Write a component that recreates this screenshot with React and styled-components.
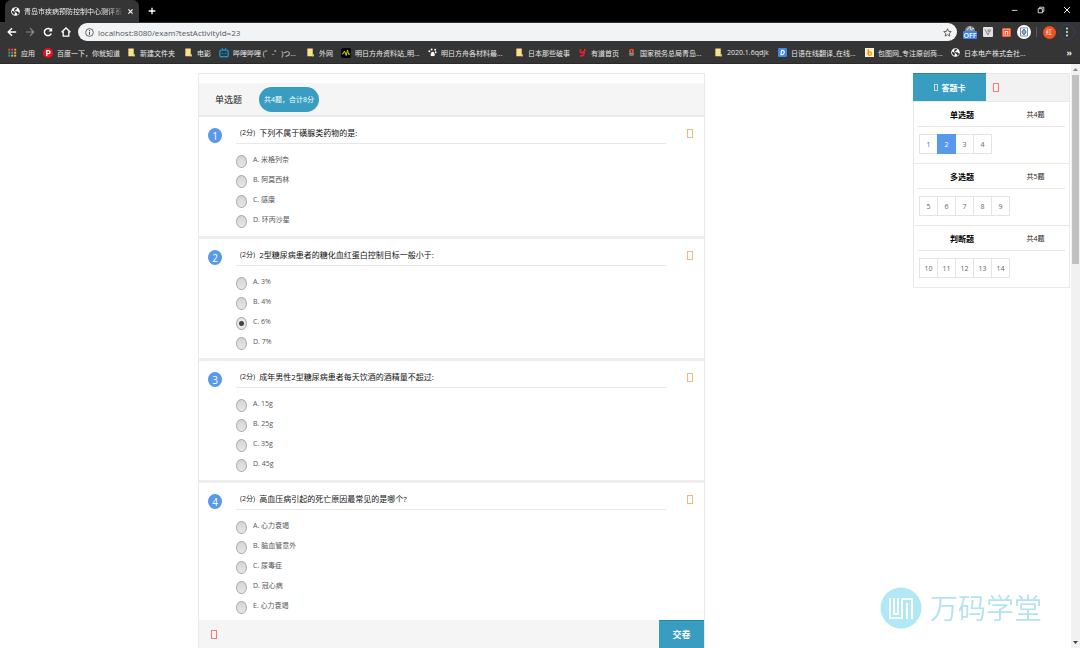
import React, { useState } from "react";
import styled, { createGlobalStyle, css } from "styled-components";

const Global = createGlobalStyle`
  * { box-sizing: border-box; }
  html, body, #root { height: 100%; }
  body { margin: 0; overflow: hidden; background: #fff; }
  body, button, input {
    font-family: "Open Sans", "Noto Sans CJK SC", sans-serif;
    font-size: 7px;
  }
  button { border: 0; padding: 0; background: none; color: inherit; cursor: pointer; }
  a { color: inherit; text-decoration: none; }
  h1, h2, h3, p, ul, ol, fieldset, legend { margin: 0; padding: 0; border: 0; font-weight: 400; list-style: none; }
`;

const Page = styled.div`
  display: flex;
  flex-direction: column;
  height: 100vh;
`;

/* ---------- browser frame ---------- */

const TabStrip = styled.header`
  display: flex;
  align-items: flex-end;
  height: 22px;
  padding-left: 5px;
  background: #000;
  color: #fff;
`;

const Tab = styled.div`
  display: flex;
  align-items: center;
  gap: 4px;
  height: 22px;
  padding: 0 5px 0 6px;
  border-radius: 6px 6px 0 0;
  background: #353535;
`;

const TabTitle = styled.span`
  white-space: nowrap;
  color: #eee;
  mask-image: linear-gradient(90deg, #000 85%, rgba(0, 0, 0, 0.2));
`;

const IconButton = styled.button`
  display: grid;
  place-items: center;
  width: ${(p) => p.$w || 18}px;
  height: ${(p) => p.$h || 18}px;
  flex: none;
  svg { display: block; }
`;

const WindowButtons = styled.div`
  display: flex;
  align-items: center;
  margin-left: auto;
`;

const Toolbar = styled.nav`
  display: flex;
  align-items: center;
  height: 20px;
  padding: 0 4px 0 3px;
  background: #353535;
  color: #fff;
`;

const AddressBar = styled.form`
  display: flex;
  align-items: center;
  flex: 1;
  gap: 4px;
  height: 18px;
  margin: 0 4px 0 3px;
  padding: 0 5px 0 7px;
  border-radius: 9px;
  background: #f1f3f4;
  color: #444;
`;

const AddressInput = styled.input`
  flex: 1;
  min-width: 0;
  border: 0;
  padding: 0;
  background: transparent;
  color: #55585c;
  font-size: 8px;
  outline: 0;
`;

const Divider = styled.span`
  width: 1px;
  height: 10px;
  margin: 0 3px;
  background: #5a5a5a;
`;

const Profile = styled.span`
  display: grid;
  place-items: center;
  width: 13px;
  height: 13px;
  border-radius: 50%;
  background: #f4511e;
  color: #fff;
  font-size: 6px;
  line-height: 1;
`;

const MenuRing = styled.span`
  display: grid;
  place-items: center;
  width: 16px;
  height: 16px;
  border: 1px solid #2b4468;
  border-radius: 50%;
`;

const BookmarkBar = styled.nav`
  display: flex;
  align-items: center;
  height: 22px;
  padding: 0 8px;
  border-bottom: 1px solid #2a2a2a;
  background: #353535;
  color: #e8e8e8;
`;

const Bookmark = styled.a`
  display: flex;
  align-items: center;
  gap: 4px;
  flex: 0 0 ${(p) => p.$w}px;
  white-space: nowrap;
  svg { flex: none; }
`;

const More = styled.button`
  margin-left: auto;
  font-size: 9px;
  font-weight: 700;
`;

/* ---------- page ---------- */

const Viewport = styled.div`
  display: flex;
  flex: 1;
  min-height: 0;
`;

const Content = styled.main`
  display: grid;
  flex: 1;
  grid-template-columns: 198fr 507fr 208fr 157fr 1fr;
  grid-template-rows: minmax(0, 1fr);
  padding-top: 9px;
`;

const Exam = styled.form`
  display: flex;
  flex-direction: column;
  grid-column: 2;
  border: 1px solid #eaeaea;
  border-bottom: 0;
`;

const ExamBody = styled.div`
  flex: 1;
  min-height: 0;
  padding-top: 9px;
  overflow: hidden;
`;

const GroupHeader = styled.div`
  display: flex;
  align-items: center;
  gap: 17px;
  height: 34px;
  padding-left: 16px;
  border-bottom: 2px solid #eaeaea;
  background: #f5f5f5;
`;

const GroupTitle = styled.h1`
  color: #222;
  font-size: 9px;
`;

const Pill = styled.span`
  padding: 0 5px;
  border-radius: 13px;
  background: #399dc2;
  color: #fff;
  line-height: 25px;
`;

const Question = styled.fieldset`
  display: grid;
  grid-template-columns: 28px minmax(0, 1fr) 38px;
  min-width: 0;
  padding: 0 0 6px 9px;
  border-bottom: 3px solid #eee;
`;

const Number = styled.span`
  display: grid;
  place-items: center;
  width: 14px;
  height: 15px;
  margin-top: 11px;
  border-radius: 50%;
  background: #5899eb;
  color: #fff;
  font-size: 10px;
  line-height: 1;
`;

const QuestionTitle = styled.div`
  display: flex;
  align-items: center;
  gap: 4px;
  height: 27px;
  padding: 6px 0 0 4px;
  border-bottom: 1px solid #e8e8e8;
  color: #222;
  line-height: 12px;
`;

const QuestionText = styled.h2`
  color: #111;
  font-size: 8px;
`;

const Options = styled.div`
  padding-top: 6px;
`;

const Option = styled.label`
  display: flex;
  align-items: center;
  gap: 6px;
  height: 20px;
  color: #555;
  line-height: 14px;
`;

const Radio = styled.input`
  appearance: none;
  width: 11px;
  height: 13px;
  margin: 3px 0 0;
  border: 1px solid #aaa;
  border-radius: 50%;
  background: linear-gradient(#d6d6d6, #e6e6e6);
  &:checked {
    background: radial-gradient(circle, #444 0 2px, #e8e8e8 3px);
  }
`;

const tones = { orange: "#f7b67c", red: "#ff7676", white: "#bfe0ec" };

const Glyph = styled.span`
  display: block;
  width: ${(p) => (p.$small ? 4 : 6)}px;
  height: ${(p) => (p.$small ? 7 : 9)}px;
  border: 1px solid ${(p) => tones[p.$tone]};
`;

const MarkButton = styled.button`
  justify-self: end;
  align-self: start;
  margin: 12px 11px 0 0;
`;

const ExamFooter = styled.footer`
  display: flex;
  align-items: center;
  justify-content: space-between;
  flex: none;
  height: 28px;
  padding-left: 12px;
  background: #f5f5f5;
`;

const Submit = styled.button`
  width: 45px;
  height: 28px;
  border-top: 1px solid #2289b1;
  background: #399dc2;
  color: #fff;
  font-size: 9px;
  font-weight: 700;
`;

const Card = styled.aside`
  grid-column: 4;
  align-self: start;
  border: 1px solid #eaeaea;
  border-width: 0 1px 0 1px;
`;

const CardTabs = styled.div`
  display: flex;
  height: 29px;
  margin-left: -1px;
  border: 1px solid #e8e8e8;
  border-width: 1px 0;
  background: #f2f2f2;
`;

const CardTab = styled.button`
  display: flex;
  align-items: center;
  justify-content: center;
  gap: 4px;
  height: 28px;
  margin-top: -1px;
  ${(p) =>
    p.$active
      ? css`
          width: 73px;
          border-top: 1px solid #2289b1;
          background: #399dc2;
          color: #fff;
          font-size: 8px;
          font-weight: 700;
        `
      : css`
          width: 20px;
        `}
`;

const CardSection = styled.section`
  height: 62px;
  padding: 0 4px;
  border-bottom: 1px solid #eaeaea;
`;

const CardHead = styled.div`
  display: grid;
  grid-template-columns: 3fr 2fr;
  align-items: center;
  height: 25px;
  border-bottom: 1px solid #e6e6e6;
  color: #222;
  text-align: center;
`;

const CardTitle = styled.h3`
  color: #000;
  font-size: 8px;
  font-weight: 700;
`;

const Cells = styled.ol`
  display: flex;
  padding: 7px 1px 0;
`;

const Cell = styled.button`
  width: 19px;
  height: 20px;
  margin-right: -1px;
  border: 1px solid ${(p) => (p.$on ? "#5899eb" : "#e4e4e4")};
  background: ${(p) => (p.$on ? "#5899eb" : "#fff")};
  color: ${(p) => (p.$on ? "#fff" : "#666")};
  position: relative;
  z-index: ${(p) => (p.$on ? 1 : 0)};
`;

const ScrollTrack = styled.div`
  display: flex;
  flex-direction: column;
  align-items: center;
  justify-content: space-between;
  width: 9px;
  padding: 3px 0;
  background: #f1f1f1;
`;

const ScrollUpper = styled.div`
  display: flex;
  flex-direction: column;
  align-items: center;
  gap: 3px;
  height: 34%;
`;

const Thumb = styled.div`
  flex: 1;
  width: 7px;
  background: #c1c1c1;
`;

const Watermark = styled.div`
  position: fixed;
  right: 38px;
  bottom: 19px;
  display: flex;
  align-items: center;
  gap: 8px;
  color: #b5e2f1;
  font-size: 28px;
  font-weight: 350;
  line-height: 42px;
  pointer-events: none;
`;

/* ---------- drawings ---------- */

const Svg = ({ s = 10, children, ...rest }) => (
  <svg width={s} height={s} viewBox="0 0 10 10" fill="none" stroke="currentColor" aria-hidden="true" {...rest}>
    {children}
  </svg>
);

const Globe = () => (
  <Svg s={9} stroke="none">
    <circle cx="5" cy="5" r="4.8" fill="#fff" />
    <path d="M1 4.3 3.4 5l1 1.4-.6 2.3C2 8.2 1 6.5 1 4.3ZM4 1.3l2.7-.1-.5 1.7-1.6.7.3 1 2.1.2 1.5 1.4 1-.4C9 7 8 8.5 6.8 8.7l-.4-2-2-1.2-1-1.6Z" fill="#333" />
  </Svg>
);
const Folder = () => (
  <Svg s={9} stroke="none">
    <path d="M1.5.5h6v6.8h1.2v2H1.5Z" fill="#fbe18b" />
    <path d="M7.5 7.3h1.2v2H6.5Z" fill="#e8bf4c" />
  </Svg>
);
const marks = {
  apps: (
    <Svg s={9} stroke="none">
      {[0, 1, 2].map((r) =>
        [0, 1, 2].map((c) => (
          <rect key={`${r}${c}`} x={c * 3.3 + 0.3} y={r * 3.3 + 0.8} width="2.2" height="2.2"
            fill={[["#ea4335", "#ea4335", "#f58a35"], ["#34a853", "#4285f4", "#fbbc04"], ["#34a853", "#b7b7b7", "#fbbc04"]][r][c]} />
        ))
      )}
    </Svg>
  ),
  pin: (
    <Svg s={10}>
      <circle cx="5" cy="5" r="5" fill="#f00d1e" stroke="none" />
      <path d="M3.7 8V2.7h1.8a1.4 1.4 0 0 1 0 3H3.7" stroke="#fff" strokeWidth="1.3" />
    </Svg>
  ),
  folder: <Folder />,
  bili: (
    <Svg s={10} stroke="#1596d1" strokeWidth="1.3">
      <rect x=".8" y="2.2" width="8.4" height="6.5" rx="1.3" />
      <path d="m3 .4 1.2 1.5M7 .4 5.8 1.9M3.3 4.7v1.5M6.7 4.7v1.5M2.5 9.5h1M6.5 9.5h1" />
    </Svg>
  ),
  wave: (
    <Svg s={10}>
      <rect width="10" height="10" rx="2" fill="#000" stroke="none" />
      <path d="m.8 6 1.4-.3L3.5 3l1.7 4.5L6.5 2l1.2 4.5 1.5-.7" stroke="#d9d400" strokeWidth="1" />
    </Svg>
  ),
  paw: (
    <Svg s={9} stroke="none" fill="#fff">
      <circle cx="1.5" cy="3.7" r="1.1" /><circle cx="4" cy="1.7" r="1.1" />
      <circle cx="8" cy="2" r="1.1" /><circle cx="8.5" cy="4.7" r="1" />
      <path d="M5 4.2c2 0 1.8 1.7 2.5 2.8.7 1.3-.8 2.3-2.3 2-1.7.3-3-.6-2.2-2C3.6 5.9 3.3 4.2 5 4.2Z" />
    </Svg>
  ),
  y: (
    <Svg s={9} stroke="#e8202c" strokeWidth="1.9">
      <path d="M2.8 1.2 2.5 4c0 1.6 3.4 1.7 4.3-.2M7.7 1 6.5 6.5C6 8.7 4 9 2.2 8.6" />
    </Svg>
  ),
  tax: (
    <Svg s={9} stroke="none">
      <circle cx="5" cy="3.5" r="2.7" fill="#e0532f" />
      <path d="M2.2 6h5.6v1.2H2.2Z" fill="#c8b8a0" /><path d="M2.8 7.8h4.4v1H2.8Z" fill="#6b8a9a" />
      <path d="M4.5 2h1v3h-1Z" fill="#5a2b20" />
    </Svg>
  ),
  d: (
    <Svg s={9}>
      <rect width="10" height="10" rx="1.5" fill="#3f86ea" stroke="none" />
      <path d="M4 2.7h1.2c2.8 0 2.2 4.6-.7 4.6h-1.2Z" stroke="#fff" strokeWidth="1.3" />
    </Svg>
  ),
  b: (
    <Svg s={9}>
      <rect width="10" height="10" fill="#fff3cf" stroke="none" />
      <path d="M3.6 1.2v6.6" stroke="#f39a1c" strokeWidth="1.8" />
      <circle cx="5.3" cy="6.3" r="1.8" stroke="#f39a1c" strokeWidth="1.6" />
    </Svg>
  ),
  globe: <Globe />,
};

const bookmarks = [
  ["apps", "应用", 35], ["pin", "百度一下，你就知道", 84], ["folder", "新建文件夹", 57],
  ["folder", "电影", 35], ["bili", "哔哩哔哩 (゜-゜)つ...", 87], ["folder", "外网", 35],
  ["wave", "明日方舟资料站_明...", 87], ["paw", "明日方舟各材料最...", 87], ["folder", "日本那些破事", 63],
  ["y", "有道首页", 49], ["tax", "国家税务总局青岛...", 87], ["folder", "2020.1.6qdjk", 64],
  ["d", "日语在线翻译_在线...", 87], ["b", "包图网_专注原创商...", 86], ["globe", "日本电产株式会社...", 87],
];

const questions = [
  ["下列不属于磺脲类药物的是:", ["米格列奈", "阿莫西林", "感康", "环丙沙星"]],
  ["2型糖尿病患者的糖化血红蛋白控制目标一般小于:", ["3%", "4%", "6%", "7%"]],
  ["成年男性2型糖尿病患者每天饮酒的酒精量不超过:", ["15g", "25g", "35g", "45g"]],
  ["高血压病引起的死亡原因最常见的是哪个?", ["心力衰竭", "脑血管意外", "尿毒症", "冠心病", "心力衰竭"]],
];

const groups = [
  ["单选题", "共4题", [1, 2, 3, 4]],
  ["多选题", "共5题", [5, 6, 7, 8, 9]],
  ["判断题", "共4题", [10, 11, 12, 13, 14]],
];

function BrowserFrame() {
  return (
    <>
      <TabStrip>
        <Tab>
          <Globe />
          <TabTitle>青岛市疾病预防控制中心测评系</TabTitle>
          <IconButton $w={8} aria-label="关闭标签页">
            <Svg s={7} strokeWidth="1.5"><path d="m2 2 6 6M8 2 2 8" /></Svg>
          </IconButton>
        </Tab>
        <IconButton $w={26} $h={22} aria-label="新标签页">
          <Svg s={8} strokeWidth="1.7"><path d="M5 .8v8.4M.8 5h8.4" /></Svg>
        </IconButton>
        <WindowButtons>
          <IconButton $w={26} $h={24} aria-label="最小化"><Svg s={8}><path d="M1 5.5h7" /></Svg></IconButton>
          <IconButton $w={26} $h={24} aria-label="还原">
            <Svg s={8}><path d="M1.5 3.3h5.2v5.2H1.5ZM3.3 3.3V1.5h5.2v5.2H6.7" /></Svg>
          </IconButton>
          <IconButton $w={26} $h={24} aria-label="关闭"><Svg s={8} strokeWidth="1.2"><path d="m1.3 1.3 7.4 7.4M8.7 1.3 1.3 8.7" /></Svg></IconButton>
        </WindowButtons>
      </TabStrip>
      <Toolbar>
        <IconButton aria-label="后退"><Svg strokeWidth="1.4"><path d="M9.2 5H1.5M5 1.2 1.2 5 5 8.8" /></Svg></IconButton>
        <IconButton aria-label="前进"><Svg stroke="#8b8b8b" strokeWidth="1.2"><path d="M.8 5h7.7M5 1.2 8.8 5 5 8.8" /></Svg></IconButton>
        <IconButton aria-label="刷新">
          <Svg strokeWidth="1.5"><path d="M8.3 6.5A3.6 3.6 0 1 1 7.7 2.6" /><path d="M9.2.8v3.7H5.5Z" fill="#fff" stroke="none" /></Svg>
        </IconButton>
        <IconButton aria-label="主页"><Svg strokeWidth="1.3"><path d="M.6 5.3 5 1l4.4 4.3M2.2 4.5v4.6h5.6V4.5" /></Svg></IconButton>
        <AddressBar onSubmit={(e) => e.preventDefault()}>
          <Svg s={9} strokeWidth=".9"><circle cx="5" cy="5" r="4.3" /><path d="M5 4.3v3.2M5 2.3v1.2" strokeWidth="1.1" /></Svg>
          <AddressInput aria-label="地址" defaultValue="localhost:8080/exam?testActivityId=23" />
          <Svg s={9} strokeWidth=".9"><path d="m5 .9 1.2 2.8 3 .3-2.3 2 .7 3L5 7.4 2.4 9l.7-3L.8 4l3-.3Z" /></Svg>
        </AddressBar>
        <IconButton aria-label="扩展 OFF">
          <svg width="14" height="16" viewBox="0 0 14 16" aria-hidden="true">
            <path d="M2 7c0-3 2-5 5-5s5 2 5 5" fill="#888" /><path d="M4 6 7 2.5 8 6l3-2" stroke="#ddd" fill="none" />
            <rect y="7" width="14" height="8" rx="1" fill="#3b82f0" />
            <text x="7" y="13.5" textAnchor="middle" fontSize="7" fontWeight="600" fill="#fff">OFF</text>
          </svg>
        </IconButton>
        <IconButton aria-label="扩展 V">
          <Svg><rect width="10" height="10" rx="1" fill="#e3e3e3" stroke="none" /><path d="M1.8 2.3 5 8l1-2" stroke="#888" /><path d="M4 2.6h4.5L7 5.6H5Z" fill="#999" stroke="none" /></Svg>
        </IconButton>
        <IconButton aria-label="扩展 n">
          <Svg s={9}><rect width="10" height="10" rx="1.5" fill="#f2542d" stroke="none" /><path d="M1.5 8.5v-7h7v7Z" stroke="#ffb49a" strokeWidth=".8" /><path d="M3.7 7.3V3.8h2.6v3.5" stroke="#fff" strokeWidth="1.2" /></Svg>
        </IconButton>
        <IconButton aria-label="扩展 R">
          <Svg s={14}><circle cx="5" cy="5" r="5" fill="#fff" stroke="none" /><path d="M2.5 2.1h5v5.8h-5Z" stroke="#5580a8" strokeWidth=".6" /><path d="m5 2.9 1.5 2.1L5 7.1 3.5 5ZM5 4v2" stroke="#27507e" strokeWidth=".7" /></Svg>
        </IconButton>
        <Divider />
        <IconButton aria-label="个人资料"><Profile>红</Profile></IconButton>
        <IconButton aria-label="菜单">
          <MenuRing><Svg fill="#fff" stroke="none"><circle cx="5" cy="1.5" r=".9" /><circle cx="5" cy="5" r=".9" /><circle cx="5" cy="8.5" r=".9" /></Svg></MenuRing>
        </IconButton>
      </Toolbar>
      <BookmarkBar>
        {bookmarks.map(([icon, label, w]) => (
          <Bookmark key={label} href="#" $w={w}>{marks[icon]}<span>{label}</span></Bookmark>
        ))}
        <More aria-label="更多书签">»</More>
      </BookmarkBar>
    </>
  );
}

export default function App() {
  const [answers, setAnswers] = useState({ 1: 2 });
  return (
    <Page>
      <Global />
      <BrowserFrame />
      <Viewport>
        <Content>
          <Exam onSubmit={(e) => e.preventDefault()}>
            <ExamBody>
              <GroupHeader>
                <GroupTitle>单选题</GroupTitle>
                <Pill>共4题，合计8分</Pill>
              </GroupHeader>
              {questions.map(([title, options], q) => (
                <Question key={title} aria-labelledby={`q${q}`}>
                  <Number>{q + 1}</Number>
                  <div>
                    <QuestionTitle>
                      <span>(2分)</span>
                      <QuestionText id={`q${q}`}>{title}</QuestionText>
                    </QuestionTitle>
                    <Options>
                      {options.map((text, i) => (
                        <Option key={i}>
                          <Radio type="radio" name={`q${q}`} checked={answers[q] === i}
                            onChange={() => setAnswers({ ...answers, [q]: i })} />
                          <span>{"ABCDE"[i]}. {text}</span>
                        </Option>
                      ))}
                    </Options>
                  </div>
                  <MarkButton type="button" aria-label="标记"><Glyph $tone="orange" /></MarkButton>
                </Question>
              ))}
            </ExamBody>
            <ExamFooter>
              <button type="button" aria-label="剩余时间"><Glyph $tone="red" /></button>
              <Submit>交卷</Submit>
            </ExamFooter>
          </Exam>
          <Card>
            <CardTabs>
              <CardTab $active><Glyph $tone="white" $small />答题卡</CardTab>
              <CardTab aria-label="计时"><Glyph $tone="red" /></CardTab>
            </CardTabs>
            {groups.map(([name, count, cells]) => (
              <CardSection key={name}>
                <CardHead><CardTitle>{name}</CardTitle><span>{count}</span></CardHead>
                <Cells>
                  {cells.map((n) => (
                    <li key={n}><Cell $on={answers[n - 1] !== undefined}>{n}</Cell></li>
                  ))}
                </Cells>
              </CardSection>
            ))}
          </Card>
        </Content>
        <ScrollTrack>
          <ScrollUpper>
            <Svg s={5} stroke="none" fill="#888"><path d="m0 8 5-6 5 6Z" /></Svg>
            <Thumb />
          </ScrollUpper>
          <Svg s={5} stroke="none" fill="#444"><path d="m0 2 5 6 5-6Z" /></Svg>
        </ScrollTrack>
      </Viewport>
      <Watermark>
        <svg width="42" height="42" viewBox="0 0 42 42" fill="none" aria-hidden="true">
          <circle cx="21" cy="21" r="20.5" fill="#b1e8f6" />
          <path d="M10 11v20h12V12h10v20M14 11v16h4V11M27 16v16" stroke="#fff" strokeWidth="2" />
        </svg>
        <span>万码学堂</span>
      </Watermark>
    </Page>
  );
}
